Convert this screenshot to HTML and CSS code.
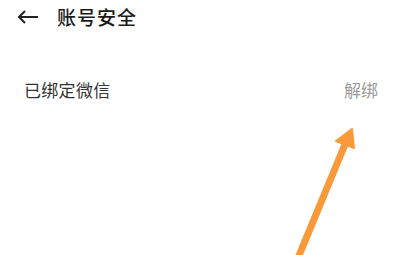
FILE: index.html
```html
<!DOCTYPE html>
<html lang="zh">
<head>
<meta charset="utf-8">
<link rel="stylesheet" href="styles.css">
</head>
<body>
<div class="page">
  <header class="topbar">
    <svg class="back" width="22" height="14" viewBox="0 0 22 14">
      <path d="M21 7H2M8 1L2 7l6 6" fill="none" stroke="#222" stroke-width="2"/>
    </svg>
    <h1 class="title">账号安全</h1>
  </header>
  <div class="row">
    <span class="label">已绑定微信</span>
    <span class="action">解绑</span>
  </div>
  <svg class="pointer" width="400" height="255" viewBox="0 0 400 255">
    <line x1="298" y1="258" x2="346" y2="142" stroke="#F89A3A" stroke-width="7" stroke-linecap="round"/>
    <polygon points="352,129 336,141 354,148" fill="#F89A3A" stroke="#F89A3A" stroke-width="2" stroke-linejoin="round"/>
  </svg>
</div>
</body>
</html>
```
FILE: styles.css
```css
html, body {
  margin: 0;
  padding: 0;
  background: #fff;
}
.page {
  position: relative;
  width: 400px;
  height: 255px;
  overflow: hidden;
  font-family: "Noto Sans CJK SC", "Noto Sans", sans-serif;
}
.topbar {
  display: flex;
  align-items: center;
  height: 33px;
  padding-left: 17px;
}
.back {
  display: block;
  margin-top: 1px;
}
.title {
  margin: 0 0 0 18px;
  font-size: 19px;
  font-weight: 500;
  color: #1a1a1a;
  letter-spacing: 1px;
}
.row {
  display: flex;
  justify-content: space-between;
  align-items: center;
  margin-top: 45px;
  padding: 0 22px 0 24px;
  height: 22px;
}
.label {
  font-size: 17px;
  color: #333;
  letter-spacing: 0.3px;
}
.action {
  font-size: 17px;
  color: #9a9a9a;
}
.pointer {
  position: absolute;
  left: 0;
  top: 0;
}
```
